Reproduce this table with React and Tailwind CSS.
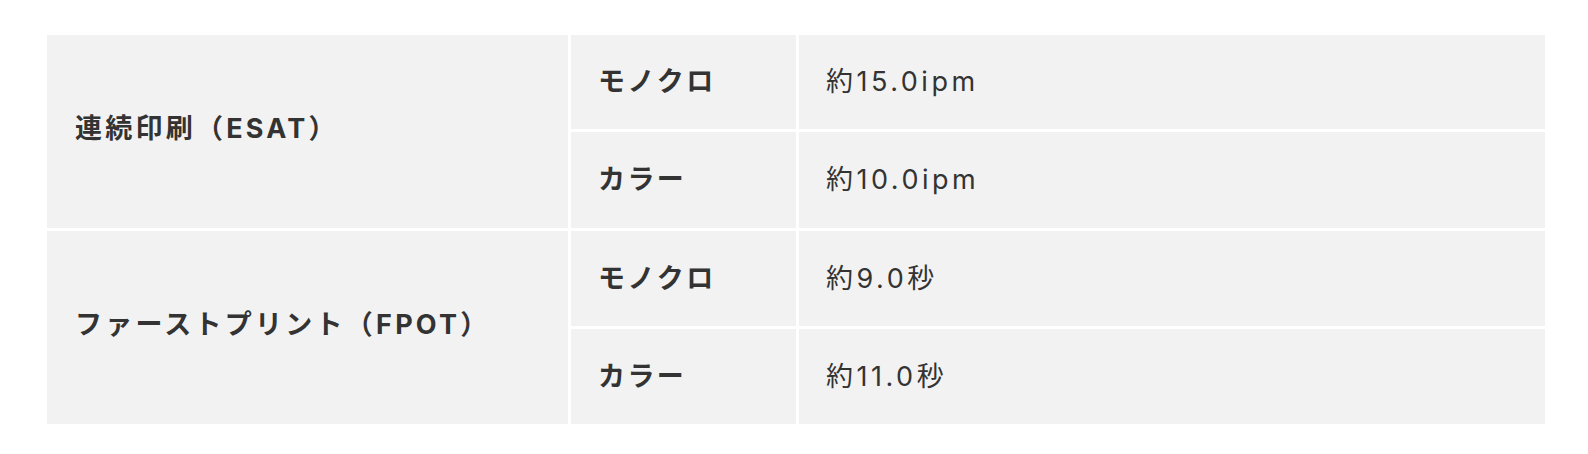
import React from 'react';

const rows = [
    {
        label: '連続印刷（ESAT）',
        items: [
            { mode: 'モノクロ', value: '約15.0ipm' },
            { mode: 'カラー', value: '約10.0ipm' },
        ],
    },
    {
        label: 'ファーストプリント（FPOT）',
        items: [
            { mode: 'モノクロ', value: '約9.0秒' },
            { mode: 'カラー', value: '約11.0秒' },
        ],
    },
];

const cell = 'bg-[#f2f2f2] flex items-center';

export default function App() {
    return (
        <div className="w-[1588px] h-[454px] bg-white pt-[35px] pl-[47px] font-['Inter','Noto_Sans_CJK_JP',sans-serif] text-[#333333] text-[27px] leading-[1.4]">
            <div className="w-[1498px] grid grid-cols-[521px_225px_1fr] grid-rows-[94px_96px_95px_95px] gap-[3px]">
                {rows.map((row) => (
                    <React.Fragment key={row.label}>
                        <div className={`${cell} row-span-2 pl-[28px] font-bold tracking-[0.12em] pb-[6px]`}>{row.label}</div>
                        {row.items.map((it, i) => (
                            <React.Fragment key={i}>
                                <div className={`${cell} pl-[27px] font-bold tracking-[0.09em]`}>{it.mode}</div>
                                <div className={`${cell} pl-[27px] tracking-[0.13em]`}>{it.value}</div>
                            </React.Fragment>
                        ))}
                    </React.Fragment>
                ))}
            </div>
        </div>
    );
}
